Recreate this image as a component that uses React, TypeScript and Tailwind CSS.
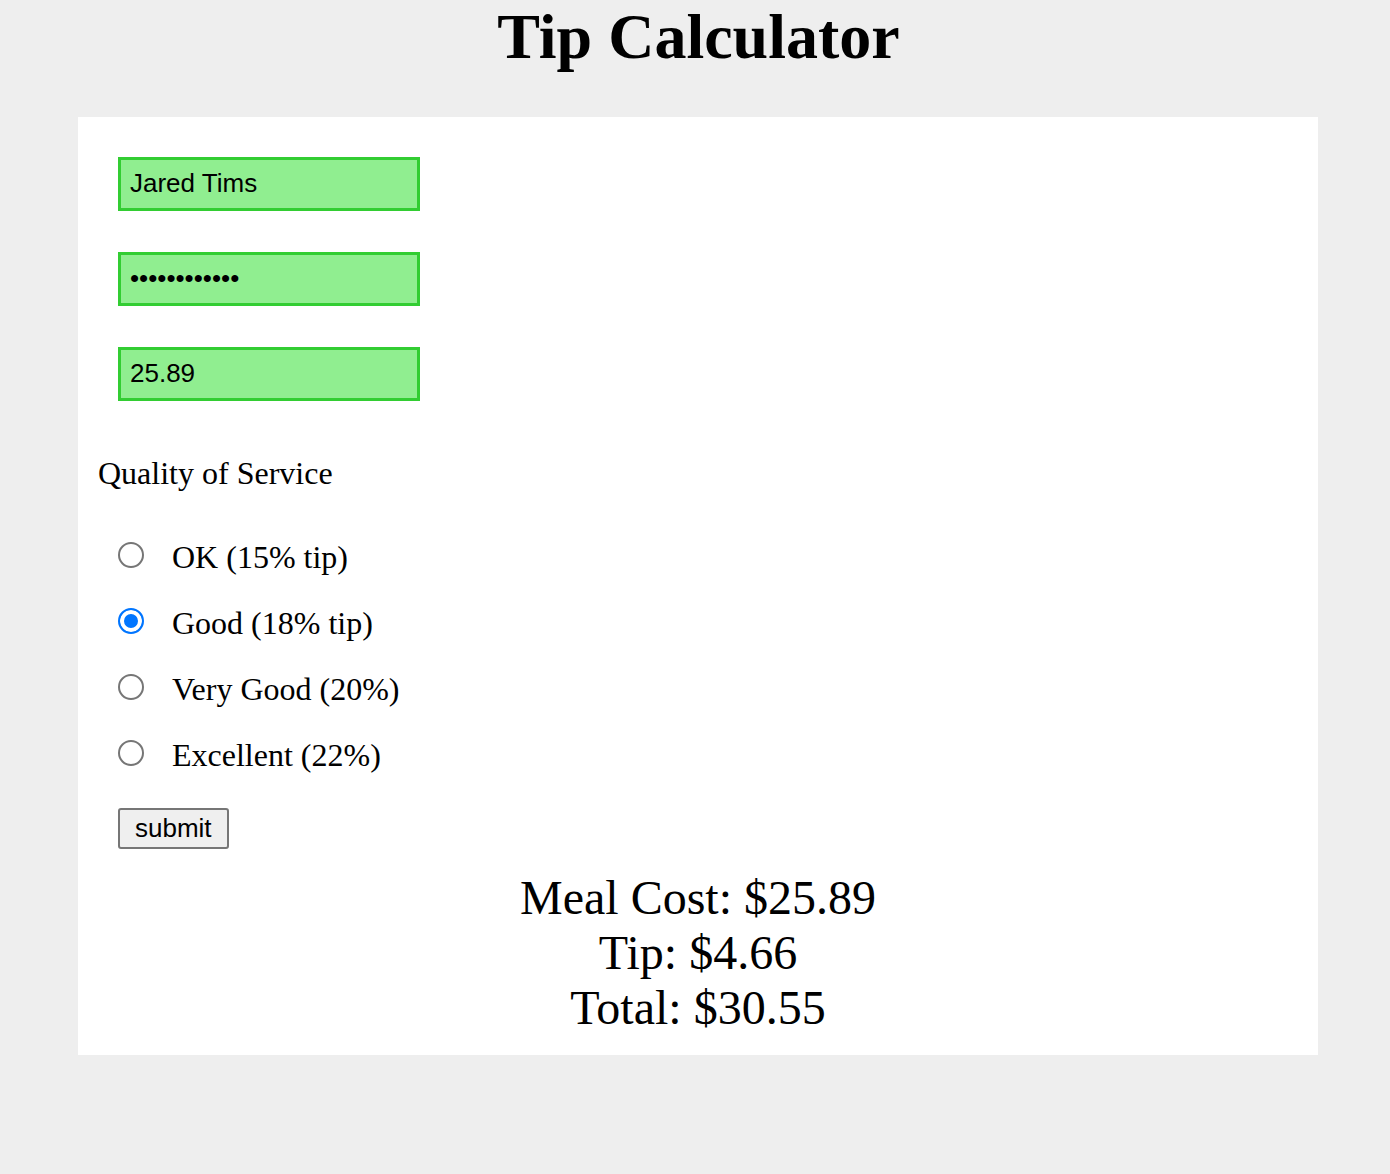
import React, { useState } from "react";

const options = [
  { id: "ok", label: "OK (15% tip)", rate: 0.15 },
  { id: "good", label: "Good (18% tip)", rate: 0.18 },
  { id: "vgood", label: "Very Good (20%)", rate: 0.2 },
  { id: "excellent", label: "Excellent (22%)", rate: 0.22 },
];

const inputCls =
  "block w-[302px] h-[54px] border-[3px] border-[#32cd32] bg-[#90ee90] px-[9px] text-[26px] text-black font-['Liberation_Sans',Arial,sans-serif] outline-none";

export default function App() {
  const [name, setName] = useState("Jared Tims");
  const [pass, setPass] = useState("••••••••••••");
  const [cost, setCost] = useState("25.89");
  const [service, setService] = useState("good");

  const meal = parseFloat(cost) || 0;
  const rate = options.find((o) => o.id === service)?.rate ?? 0;
  const tip = Math.round(meal * rate * 100) / 100;
  const total = meal + tip;

  return (
    <div className="min-h-screen bg-[#eeeeee] text-black font-['Liberation_Serif','Times_New_Roman',serif] overflow-hidden">
      <h1 className="m-0 mb-[43px] pl-[7px] text-center text-[64px] leading-[1.15] font-bold">
        Tip Calculator
      </h1>

      <div className="ml-[78px] w-[1240px] bg-white p-5">
        <div className="mt-5 ml-5 flex flex-col gap-[41px]">
          <input className={inputCls} value={name} onChange={(e) => setName(e.target.value)} />
          <input className={inputCls} value={pass} onChange={(e) => setPass(e.target.value)} />
          <input className={inputCls} value={cost} onChange={(e) => setCost(e.target.value)} />
        </div>

        <p className="mt-[54px] text-[32px] leading-[1.15]">Quality of Service</p>

        <div className="mt-[48px] ml-5 flex flex-col gap-[29px]">
          {options.map((o) => (
            <label key={o.id} className="flex items-start gap-[28px] text-[32px] leading-[1.15] cursor-pointer">
              <input
                type="radio"
                name="service"
                checked={service === o.id}
                onChange={() => setService(o.id)}
                className="appearance-none mt-[3px] w-[26px] h-[26px] shrink-0 rounded-full border-2 border-[#767676] bg-white checked:border-[#0075ff] checked:bg-[#0075ff] checked:shadow-[inset_0_0_0_4px_white]"
              />
              <span>{o.label}</span>
            </label>
          ))}
        </div>

        <button className="mt-[34px] ml-5 h-[41px] px-[15px] rounded-[3px] border-2 border-[#767676] bg-[#efefef] text-[26px] leading-none font-['Liberation_Sans',Arial,sans-serif]">
          submit
        </button>

        <div className="mt-[21px] text-center text-[48px] leading-[1.15]">
          <div>Meal Cost: ${meal.toFixed(2)}</div>
          <div>Tip: ${tip.toFixed(2)}</div>
          <div>Total: ${total.toFixed(2)}</div>
        </div>
      </div>
    </div>
  );
}
